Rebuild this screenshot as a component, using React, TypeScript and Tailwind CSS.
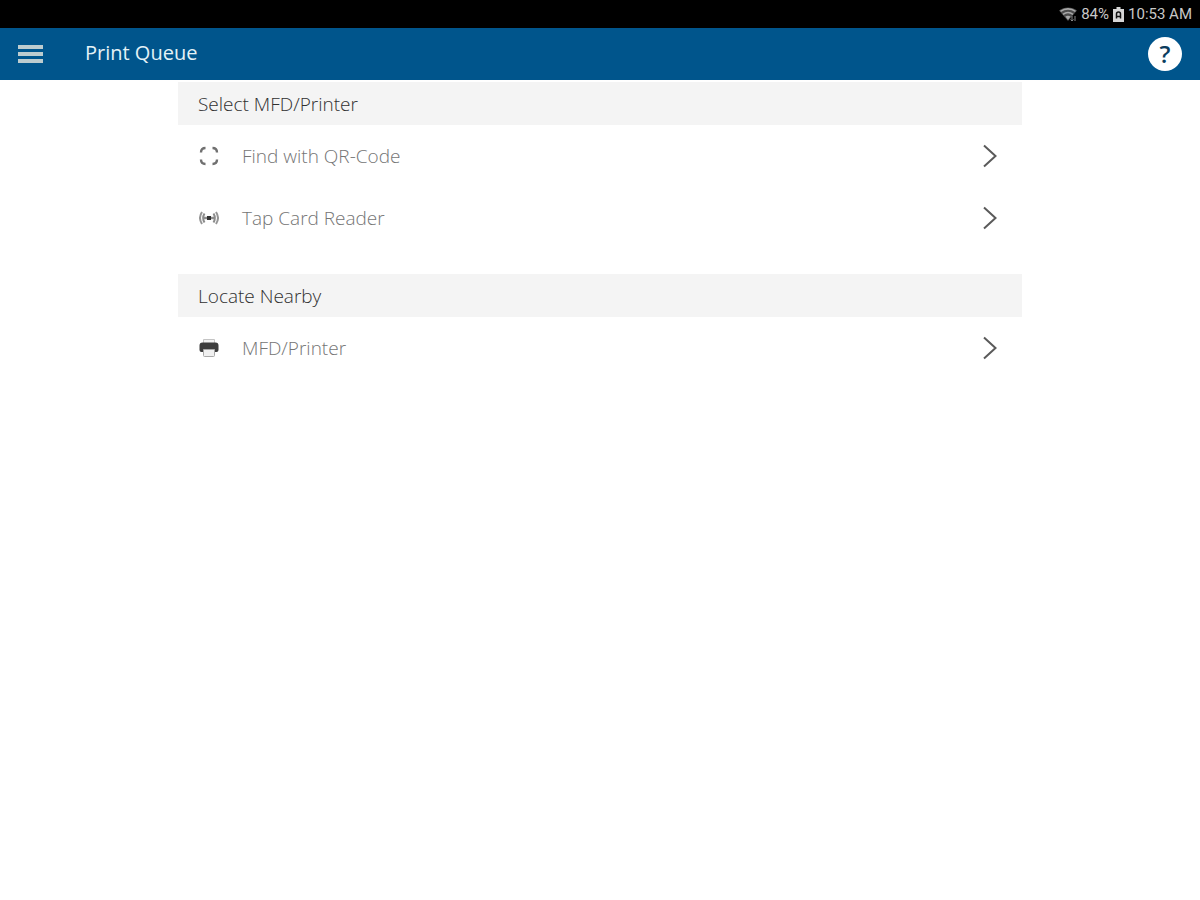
import type { ReactNode } from 'react';

interface RowProps {
  icon: ReactNode;
  label: string;
}

function WifiIcon() {
  return (
    <svg width="18" height="16" viewBox="0 0 18 16" aria-hidden="true">
      <path d="M0 4.6C5 .4 13 .4 18 4.6L9 15z" fill="#4c4c4c" />
      <path d="M1.5 5.4C6 2 12 2 16.5 5.4M4 8.3c3-2.2 7-2.2 10 0" fill="none" stroke="#a8a8a8" strokeWidth="1.6" />
      <path d="M6.4 10.6c1.6-1.2 3.6-1.2 5.2 0L9 14z" fill="#a8a8a8" />
      <path d="M13 10v5M11.5 13.5L13 15l1.5-1.5M16 15v-5" fill="none" stroke="#8a8a8a" strokeWidth="1" />
    </svg>
  );
}

function BatteryIcon() {
  return (
    <svg width="11" height="15" viewBox="0 0 11 15" aria-hidden="true">
      <path d="M3.500 0h4v2H11v13H0V2h3.500z" fill="#d6d6d6" />
      <path d="M3.500 11.500V7a2 2 0 0 1 4 0v4.500M3.500 9.500h4" fill="none" stroke="#111" strokeWidth="1.500" />
    </svg>
  );
}

function ScanIcon() {
  return (
    <svg width="20" height="20" viewBox="0 0 20 20" aria-hidden="true">
      <path
        d="M2 6.500C2 3.500 3.500 2 6.500 2M13.500 2C16.500 2 18 3.500 18 6.500M18 13.500c0 3-1.500 4.500-4.500 4.500M6.500 18C3.500 18 2 16.500 2 13.500"
        fill="none"
        stroke="#707070"
        strokeWidth="2.400"
      />
    </svg>
  );
}

function CardReaderIcon() {
  return (
    <svg width="20" height="20" viewBox="0 0 20 20" aria-hidden="true">
      <path d="M3 4c-2.400 3.600-2.400 8.400 0 12M17 4c2.400 3.600 2.400 8.400 0 12" fill="none" stroke="#959595" strokeWidth="2" />
      <path d="M5.500 5.500c-1.600 2.700-1.600 6.300 0 9M14.500 5.500c1.600 2.700 1.600 6.300 0 9" fill="none" stroke="#8c8c8c" strokeWidth="2" />
      <path d="M5 10h10" stroke="#8c8c8c" strokeWidth="2.400" />
      <rect x="8" y="8" width="4" height="4" fill="#333" />
    </svg>
  );
}

function PrinterIcon() {
  return (
    <svg width="20" height="20" viewBox="0 0 20 20" aria-hidden="true">
      <path d="M4.500 5V1.500h11V5" fill="#f2f2f2" stroke="#c4c4c4" />
      <path d="M3.500 4.500h13a3 3 0 0 1 3 3V12a2 2 0 0 1-2 2h-15a2 2 0 0 1-2-2V7.500a3 3 0 0 1 3-3z" fill="#3d3d3d" />
      <path d="M4.500 11.500h11v6a1 1 0 0 1-1 1h-9a1 1 0 0 1-1-1z" fill="#f0f0f0" stroke="#a8a8a8" />
    </svg>
  );
}

function ChevronIcon() {
  return (
    <svg width="16" height="24" viewBox="0 0 16 24" aria-hidden="true">
      <path d="M2 1.500L13.500 12L2 22.500" fill="none" stroke="#5a5a5a" strokeWidth="2" />
    </svg>
  );
}

function SectionTitle({ children }: { children: ReactNode }) {
  return (
    <h2 className="flex h-[43px] items-center bg-[#f4f4f4] px-5 text-[19px] leading-6 text-[#303030]">
      {children}
    </h2>
  );
}

function Row({ icon, label }: RowProps) {
  return (
    <li>
      <button type="button" className="flex h-[62px] w-full items-center pr-6 pl-[21px] text-left">
        {icon}
        <span className="ml-[23px] flex-1 text-[19px] leading-6 text-[#757575]">{label}</span>
        <ChevronIcon />
      </button>
    </li>
  );
}

export default function App() {
  return (
    <div className="min-h-screen bg-white font-['Open_Sans',sans-serif] font-light">
      <div className="flex h-7 items-center justify-end gap-1 bg-black px-2 font-['Roboto',sans-serif] text-[15px] font-normal text-[#c8c8c8]">
        <WifiIcon />
        <span>84%</span>
        <BatteryIcon />
        <span>10:53 AM</span>
      </div>

      <header className="flex h-[52px] items-center bg-[#00558c] px-[18px]">
        <button type="button" aria-label="Menu" className="flex w-[25px] flex-col gap-[3px]">
          <span className="h-1 bg-[#bccccf]" />
          <span className="h-1 bg-[#bccccf]" />
          <span className="h-1 bg-[#bccccf]" />
        </button>
        <h1 className="ml-[42px] flex-1 pb-0.5 text-xl font-normal text-[#e4f2f7]">Print Queue</h1>
        <button
          type="button"
          aria-label="Help"
          className="flex size-[34px] items-center justify-center rounded-full bg-white text-2xl font-semibold text-[#0b3d5e]"
        >
          ?
        </button>
      </header>

      <main className="mx-auto max-w-[844px] pt-0.5">
        <section>
          <SectionTitle>Select MFD/Printer</SectionTitle>
          <ul>
            <Row icon={<ScanIcon />} label="Find with QR-Code" />
            <Row icon={<CardReaderIcon />} label="Tap Card Reader" />
          </ul>
        </section>

        <section className="mt-[25px]">
          <SectionTitle>Locate Nearby</SectionTitle>
          <ul>
            <Row icon={<PrinterIcon />} label="MFD/Printer" />
          </ul>
        </section>
      </main>
    </div>
  );
}
